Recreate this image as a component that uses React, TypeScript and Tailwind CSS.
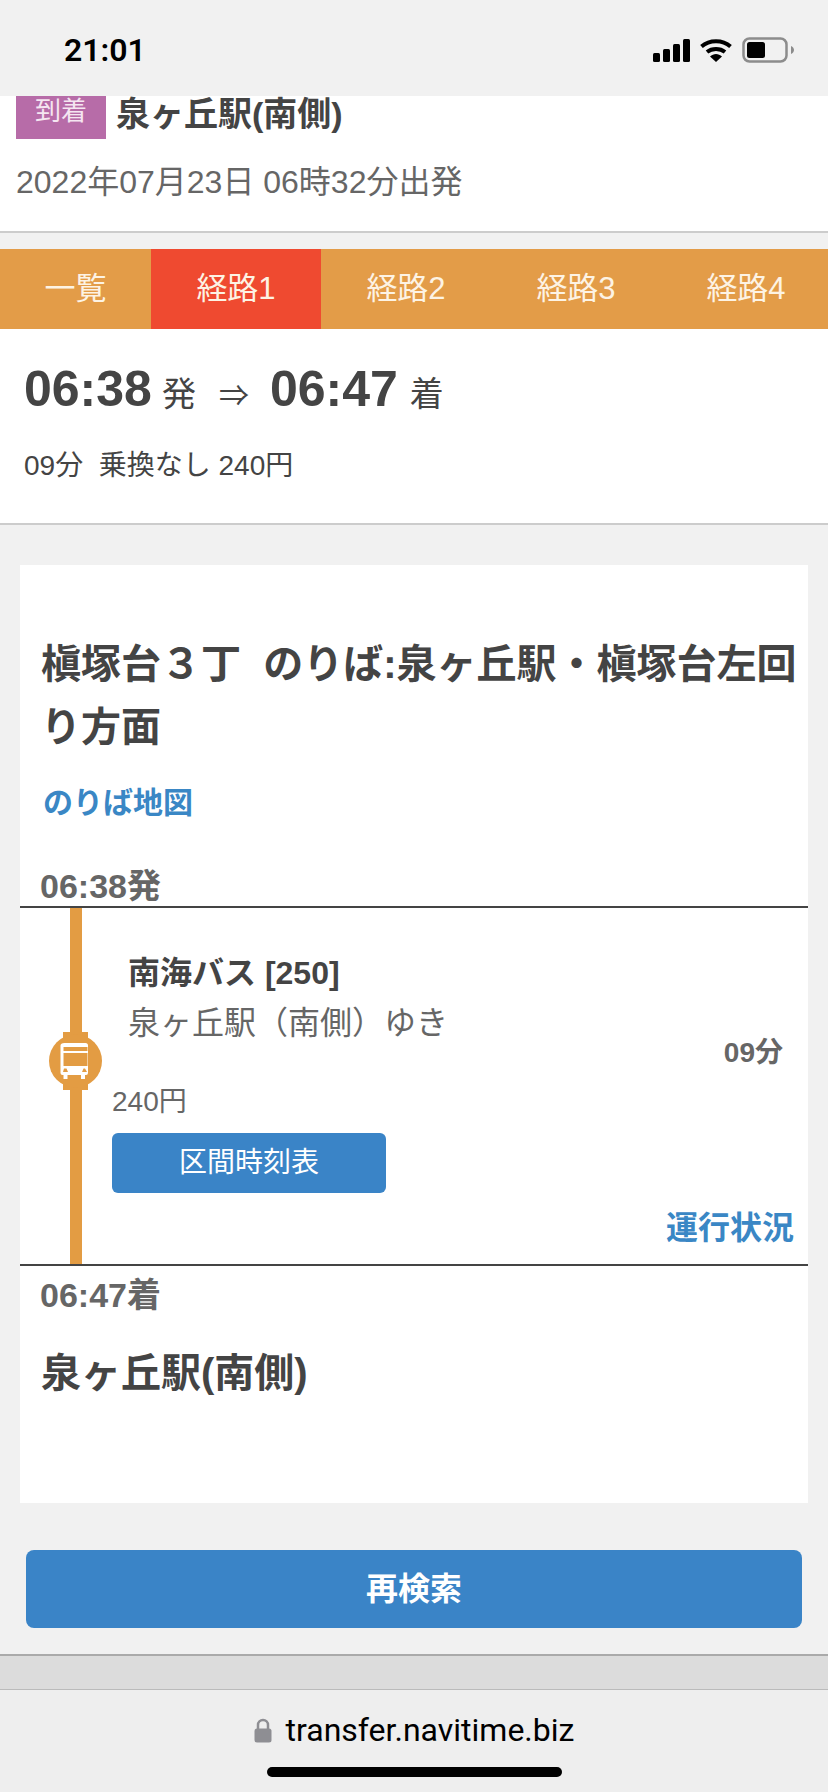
const font = '[font-family:"Liberation_Sans","Noto_Sans_CJK_JP",sans-serif]'

function BusIcon() {
  return (
    <svg width="53" height="58" viewBox="0 0 53 58" className="block shrink-0">
      <rect x="14" y="0" width="25" height="58" fill="#e39c43" />
      <ellipse cx="26.5" cy="29" rx="26.5" ry="26.5" fill="#e39c43" />
      {/* bus front */}
      <path
        fillRule="evenodd"
        fill="#fff"
        d="M15.5 11h21a2.5 2.5 0 0 1 2.5 2.5V41a2 2 0 0 1-2 2h-1v4h-4v-4H18.500v4h-4v-4h-1a2 2 0 0 1-2-2V13.500A4 2.500 0 0 1 15.500 11zM14.500 15v4h24v-4zM14.500 21v13h24V21zM15 36.500l-1 3.500h5l-1.500-3.500zM36 36.500h-1.500L33 40h5z"
      />
    </svg>
  )
}

function StatusIcons() {
  return (
    <div className="flex items-center">
      <svg width="38" height="23" viewBox="0 0 38 23" className="block">
        <rect x="0" y="14" width="7" height="9" rx="1.500" fill="#000" />
        <rect x="10" y="10" width="7" height="13" rx="1.500" fill="#000" />
        <rect x="20" y="5" width="7" height="18" rx="1.500" fill="#000" />
        <rect x="30" y="0" width="7" height="23" rx="1.500" fill="#000" />
      </svg>
      <svg width="32" height="23" viewBox="0 0 32 23" className="block ml-[9px]">
        <path d="M1.500 7.500C9.500 0.500 22.500 0.500 30.500 7.500" stroke="#000" strokeWidth="4" fill="none" />
        <path d="M7 13C12 9 20 9 25 13" stroke="#000" strokeWidth="4" fill="none" />
        <path d="M10 17.500C13.500 14 18.500 14 22 17.500L16 23z" fill="#000" />
      </svg>
      <svg width="53" height="26" viewBox="0 0 53 26" className="block ml-[10px]">
        <rect x="1.500" y="1.500" width="43" height="23" rx="6" fill="none" stroke="#8c8c8c" strokeWidth="2.500" />
        <rect x="5" y="5" width="18" height="16" rx="2.500" fill="#000" />
        <path d="M49 9c2 1 3 2.500 3 4s-1 3-3 4z" fill="#8c8c8c" />
      </svg>
    </div>
  )
}

function RouteTab({ label, active, width }: { label: string; active?: boolean; width: string }) {
  return (
    <div className={`${width} shrink-0 flex items-center justify-center text-[31px] text-[#fdf3e4] ${active ? 'bg-[#ef4a30]' : ''}`}>
      {label}
    </div>
  )
}

export default function App() {
  return (
    <div className={`${font} h-[1792px] w-[828px] overflow-hidden bg-[#f1f1f1] flex flex-col text-[#444]`}>
      {/* status bar */}
      <div className="h-[96px] shrink-0 flex items-start justify-between pl-[64px] pr-[33px] pt-[31px]">
        <span className="text-[32px] leading-[38px] font-semibold text-black [font-family:Roboto,sans-serif]">21:01</span>
        <div className="pt-[6px]">
          <StatusIcons />
        </div>
      </div>

      {/* search summary */}
      <div className="h-[137px] shrink-0 bg-white border-b-2 border-[#cccccc] pl-[16px]">
        <div className="flex items-start">
          <div className="w-[90px] h-[43px] bg-[#b76ca8] text-[#f5e6f1] text-[26px] leading-[30px] text-center">到着</div>
          <div className="ml-[10px] text-[34px] leading-[36px] font-bold">泉ヶ丘駅(南側)</div>
        </div>
        <div className="mt-[23px] text-[32px] leading-[40px] text-[#666]">2022年07月23日 06時32分出発</div>
      </div>

      {/* route tabs */}
      <div className="mt-[16px] h-[80px] shrink-0 flex bg-[#e39c48] overflow-hidden">
        <RouteTab label="一覧" width="w-[151px]" />
        <RouteTab label="経路1" active width="w-[170px]" />
        <RouteTab label="経路2" width="w-[170px]" />
        <RouteTab label="経路3" width="w-[170px]" />
        <RouteTab label="経路4" width="w-[170px]" />
      </div>

      {/* route headline */}
      <div className="h-[196px] shrink-0 bg-white border-b-2 border-[#cccccc] pl-[24px]">
        <div className="flex items-baseline pt-[30px] leading-[60px]">
          <span className="text-[50px] font-bold">06:38</span>
          <span className="ml-[10px] text-[34px]">発</span>
          <span className="ml-[23px] text-[30px]">⇒</span>
          <span className="ml-[21px] text-[50px] font-bold">06:47</span>
          <span className="ml-[12px] text-[34px]">着</span>
        </div>
        <div className="mt-[20px] text-[28px] leading-[40px]">09分&nbsp;&nbsp;乗換なし 240円</div>
      </div>

      {/* route detail card */}
      <div className="mt-[40px] mx-[20px] h-[938px] shrink-0 bg-white">
        <div className="pt-[68px] pl-[21px] pr-[6px] text-[40px] leading-[63px] font-bold">
          槇塚台３丁&nbsp;&nbsp;のりば:泉ヶ丘駅・槇塚台左回り方面
        </div>
        <div className="mt-[24px] pl-[23px] text-[30px] leading-[40px] font-bold text-[#3a87c5]">のりば地図</div>
        <div className="mt-[44px] pl-[20px] text-[34px] leading-[39px] font-bold text-[#666]">06:38発</div>

        <div className="flex h-[360px] border-y-2 border-[#444] pl-[29px]">
          <div className="w-[53px] shrink-0 flex flex-col items-center">
            <div className="w-[12px] h-[124px] bg-[#e39c43]" />
            <BusIcon />
            <div className="w-[12px] flex-1 bg-[#e39c43]" />
          </div>
          <div className="flex-1 pl-[10px] pr-[14px] pt-[45px]">
            <div className="flex h-[118px] justify-between pl-[16px]">
              <div>
                <div className="text-[32px] leading-[40px] font-bold">南海バス [250]</div>
                <div className="mt-[10px] text-[32px] leading-[40px] text-[#666]">泉ヶ丘駅（南側）ゆき</div>
              </div>
              <div className="self-end pr-[11px] text-[28px] leading-[36px] font-bold text-[#666]">09分</div>
            </div>
            <div className="mt-[13px] text-[28px] leading-[36px] text-[#666]">240円</div>
            <div className="mt-[13px] w-[274px] h-[60px] rounded-[6px] bg-[#3a84c7] text-white text-[28px] flex items-center justify-center">
              区間時刻表
            </div>
            <div className="mt-[15px] text-right text-[32px] leading-[40px] font-bold text-[#3a87c5]">運行状況</div>
          </div>
        </div>

        <div className="mt-[9px] pl-[20px] text-[34px] leading-[40px] font-bold text-[#666]">06:47着</div>
        <div className="mt-[33px] pl-[21px] text-[40px] leading-[50px] font-bold">泉ヶ丘駅(南側)</div>
      </div>

      {/* search again */}
      <div className="mt-[47px] mx-[26px] h-[78px] shrink-0 rounded-[8px] bg-[#3a84c7] text-white text-[32px] font-bold flex items-center justify-center">
        再検索
      </div>

      {/* browser chrome */}
      <div className="mt-[26px] h-[36px] shrink-0 bg-[#dcdcdc] border-y border-t-2 border-t-[#aaaaaa] border-b-[#bbbbbb]" />
      <div className="flex-1 bg-[#eeeeee] flex flex-col items-center">
        <div className="mt-[18px] flex items-center h-[44px]">
          <svg width="18" height="25" viewBox="0 0 18 25" className="block">
            <path d="M4 11V7a5 5 0 0 1 10 0v4" fill="none" stroke="#8e8e93" strokeWidth="2.500" />
            <rect x="0.500" y="10.500" width="17" height="14" rx="2.500" fill="#8e8e93" />
          </svg>
          <span className="ml-[14px] text-[32px] text-black [font-family:Roboto,sans-serif]">transfer.navitime.biz</span>
        </div>
        <div className="mt-[15px] w-[295px] h-[10px] rounded-full bg-black" />
      </div>
    </div>
  )
}
